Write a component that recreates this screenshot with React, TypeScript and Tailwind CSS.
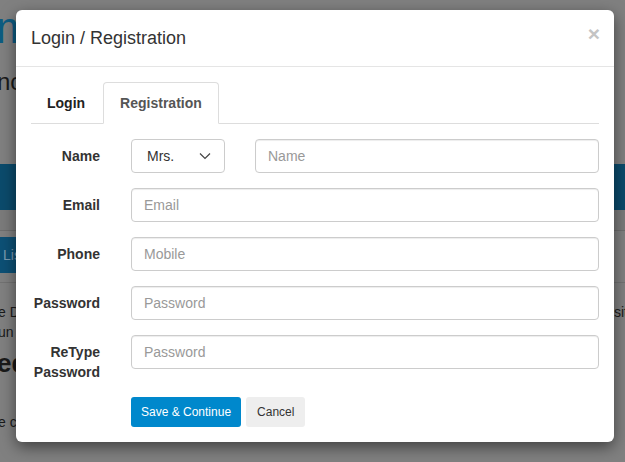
import React from "react";

const font = { fontFamily: '"Liberation Sans", Arial, sans-serif' };

function Row({ label, children }: { label: React.ReactNode; children: React.ReactNode }) {
  return (
    <div className="flex items-start">
      <label className="w-[69px] shrink-0 text-right text-[14px] font-bold leading-5 text-[#333] pt-[7px]">{label}</label>
      <div className="ml-[31px] flex-1 flex gap-[30px]">{children}</div>
    </div>
  );
}

function Input({ placeholder }: { placeholder: string }) {
  return (
    <input
      placeholder={placeholder}
      className="h-[34px] w-full rounded-[4px] border border-[#ccc] bg-white px-3 text-[14px] text-[#555] placeholder:text-[#999] outline-none shadow-[inset_0_1px_1px_rgba(0,0,0,0.075)]"
      style={font}
    />
  );
}

export default function App() {
  return (
    <div className="relative h-[462px] w-[625px] overflow-hidden bg-[#808080]" style={font}>
      {/* dimmed page behind */}
      <div className="flex flex-col">
        <div className="h-[60px] pt-[6px] text-[44px] leading-[44px] text-[#0d5c82] -ml-[4px]">m</div>
        <div className="h-[104px] pt-[8px] text-[24px] leading-[28px] text-[#1a1a1a] -ml-[3px]">nc</div>
        <div className="h-[46px] bg-[#0b4b6c]"></div>
        <div className="h-[21px] bg-[#7b7b7b] border-b border-[#6e6e6e]"></div>
        <div className="mt-[6px] h-[36px] w-[120px] bg-[#0d5075] text-[14px] leading-[36px] text-[#7d9bb0] pl-[3px]">List</div>
        <div className="mt-[9px] border-t border-[#727272]"></div>
        <div className="flex justify-between pt-[19px]">
          <div className="text-[14px] leading-[20px] text-[#1a1a1a] -ml-[2px]">
            <div>e D</div>
            <div>un</div>
            <div className="mt-[6px] text-[26px] font-bold leading-[30px] -ml-[1px]">ed</div>
            <div className="mt-[34px]">e c</div>
          </div>
          <div className="text-[14px] leading-[20px] text-[#1a1a1a] w-[11px] overflow-hidden">sit</div>
        </div>
      </div>

      {/* modal */}
      <div className="absolute left-[16px] top-[10px] w-[598px] rounded-[6px] bg-white shadow-[0_5px_15px_rgba(0,0,0,0.5)]">
        <div className="flex items-center justify-between border-b border-[#e5e5e5] px-[15px] h-[57px]">
          <h4 className="text-[18px] leading-[26px] text-[#333]">Login / Registration</h4>
          <button className="text-[21px] font-bold leading-none text-[#c4c4c4] -mr-[1px] -mt-[9px]">×</button>
        </div>
        <div className="px-[15px] pt-[15px] pb-[15px]">
          <div className="flex border-b border-[#ddd]">
            <div className="mr-[2px] -mb-px px-[15px] py-[10px] text-[14px] font-bold leading-5 text-[#222] border border-transparent">Login</div>
            <div className="-mb-px rounded-t-[4px] border border-[#ddd] border-b-white bg-white px-4 py-[10px] text-[14px] font-bold leading-5 text-[#555]">Registration</div>
          </div>
          <div className="mt-[15px] flex flex-col gap-[15px]">
            <Row label="Name">
              <div className="flex h-[34px] w-[94px] shrink-0 items-center justify-between rounded-[4px] border border-[#ccc] pl-[15px] pr-[13px] text-[14px] text-[#333]">
                <span>Mrs.</span>
                <svg width="12" height="8" viewBox="0 0 12 8" fill="none">
                  <path d="M1 1.5l5 5 5-5" stroke="#444" strokeWidth="1.2" />
                </svg>
              </div>
              <Input placeholder="Name" />
            </Row>
            <Row label="Email"><Input placeholder="Email" /></Row>
            <Row label="Phone"><Input placeholder="Mobile" /></Row>
            <Row label="Password"><Input placeholder="Password" /></Row>
            <Row label={<>ReType<br />Password</>}><Input placeholder="Password" /></Row>
          </div>
          <div className="mt-[15px] ml-[100px] flex gap-[5px]">
            <button className="h-[30px] rounded-[3px] bg-[#0088cc] px-[10px] text-[12px] text-white">Save &amp; Continue</button>
            <button className="h-[30px] rounded-[3px] bg-[#eee] px-[11px] text-[12px] text-[#333]">Cancel</button>
          </div>
        </div>
      </div>
    </div>
  );
}
